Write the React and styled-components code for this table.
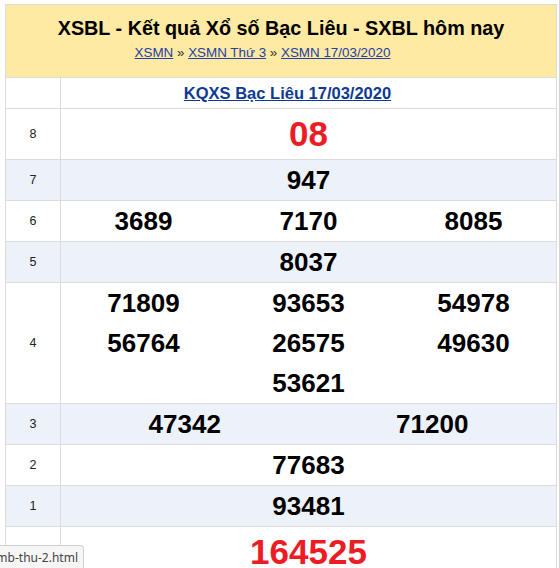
import React from 'react';
import styled, { createGlobalStyle } from 'styled-components';

const GlobalStyle = createGlobalStyle`
  html, body {
    margin: 0;
    padding: 0;
    background: #fff;
    font-family: "Liberation Sans", Arial, sans-serif;
  }
`;

const Page = styled.div`
  padding: 4px 0 0 5px;
  height: 568px;
  box-sizing: border-box;
  overflow: hidden;
`;

const Box = styled.div`
  width: 550px;
  border: 1px solid #dcdcdc;
  border-bottom: none;
`;

const Header = styled.div`
  height: 72px;
  background: #feeaa2;
  display: flex;
  flex-direction: column;
  align-items: center;
  padding-top: 12px;
  box-sizing: border-box;
`;

const Title = styled.h1`
  margin: 0;
  font-size: 19.8px;
  line-height: 23px;
  font-weight: bold;
  color: #000;
`;

const Crumbs = styled.div`
  margin-top: 4px;
  padding-right: 37px;
  font-size: 13.4px;
  line-height: 18px;
  color: #333;
`;

const Link = styled.a`
  color: ${(p) => (p.strong ? '#0d3a94' : '#2440a8')};
  font-weight: ${(p) => (p.strong ? 'bold' : 'normal')};
  text-decoration: underline;
`;

const Table = styled.div`
  border-top: 1px solid #dcdcdc;
`;

const Row = styled.div`
  display: grid;
  grid-template-columns: 55px 1fr;
  background: ${(p) => (p.shaded ? '#edf1f9' : '#fff')};
  border-bottom: 1px solid #dcdcdc;
  min-height: ${(p) => p.height || 40}px;
`;

const Label = styled.div`
  border-right: 1px solid #dcdcdc;
  display: flex;
  align-items: center;
  justify-content: center;
  font-size: 12.5px;
  color: #222;
`;

const HeadCell = styled.div`
  display: flex;
  align-items: center;
  justify-content: center;
  padding-right: 42px;
  font-size: 16.5px;
`;

const Numbers = styled.div`
  display: grid;
  grid-template-columns: repeat(${(p) => p.cols}, 1fr);
  align-content: center;
`;

const Num = styled.div`
  text-align: center;
  font-weight: bold;
  font-size: ${(p) => (p.big ? 35 : 26)}px;
  line-height: ${(p) => (p.big ? 50 : 40)}px;
  color: ${(p) => (p.big ? '#ec1c24' : '#000')};
`;

const StatusBubble = styled.div`
  position: fixed;
  left: 0;
  bottom: 0;
  width: 78px;
  height: 22px;
  background: #f6f6f6;
  border-top: 1px solid #cfcfcf;
  border-right: 1px solid #cfcfcf;
  border-top-right-radius: 4px;
  display: flex;
  justify-content: flex-end;
  align-items: center;
  overflow: hidden;
  white-space: nowrap;
  padding-right: 5px;
  font-family: "Noto Sans", "Liberation Sans", sans-serif;
  font-size: 12px;
  color: #444;
`;

const prizes = [
  { label: '8', cols: 1, nums: ['08'], big: true, height: 50 },
  { label: '7', cols: 1, nums: ['947'] },
  { label: '6', cols: 3, nums: ['3689', '7170', '8085'] },
  { label: '5', cols: 1, nums: ['8037'] },
  { label: '4', cols: 3, nums: ['71809', '93653', '54978', '56764', '26575', '49630', '', '53621', ''] },
  { label: '3', cols: 2, nums: ['47342', '71200'] },
  { label: '2', cols: 1, nums: ['77683'] },
  { label: '1', cols: 1, nums: ['93481'] },
  { label: 'ĐB', cols: 1, nums: ['164525'], big: true, height: 50 },
];

export default function App() {
  return (
    <>
      <GlobalStyle />
      <Page>
        <Box>
          <Header>
            <Title>XSBL - Kết quả Xổ số Bạc Liêu - SXBL hôm nay</Title>
            <Crumbs>
              <Link href="#">XSMN</Link>
              {' » '}
              <Link href="#">XSMN Thứ 3</Link>
              {' » '}
              <Link href="#">XSMN 17/03/2020</Link>
            </Crumbs>
          </Header>
          <Table>
            <Row height={30}>
              <Label />
              <HeadCell>
                <Link strong href="#">KQXS Bạc Liêu 17/03/2020</Link>
              </HeadCell>
            </Row>
            {prizes.map((p, i) => (
              <Row key={p.label} shaded={i % 2 === 1} height={p.height}>
                <Label>{p.label}</Label>
                <Numbers cols={p.cols}>
                  {p.nums.map((n, j) => (
                    <Num key={j} big={p.big}>{n}</Num>
                  ))}
                </Numbers>
              </Row>
            ))}
          </Table>
        </Box>
      </Page>
      <StatusBubble>xsmb-thu-2.html</StatusBubble>
    </>
  );
}
